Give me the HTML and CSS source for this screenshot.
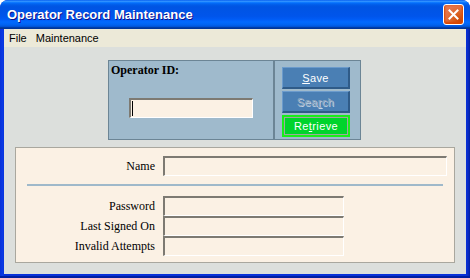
FILE: index.html
```html
<!DOCTYPE html>
<html>
<head>
<meta charset="utf-8">
<link rel="stylesheet" href="styles.css">
</head>
<body>
<div class="window">
  <div class="titlebar">
    <span class="title">Operator Record Maintenance</span>
    <span class="close" aria-label="Close">
      <svg width="11" height="11" viewBox="0 0 11 11"><path d="M1.5 1.5 L9.5 9.5 M9.5 1.5 L1.5 9.5" stroke="#fff" stroke-width="2" stroke-linecap="square"/></svg>
    </span>
  </div>
  <div class="frame">
    <div class="menubar">
      <span class="menu">File</span>
      <span class="menu">Maintenance</span>
    </div>
    <div class="client">
      <div class="idpanel">
        <div class="idleft">
          <div class="idlabel">Operator ID:</div>
          <div class="field idfield"><span class="caret"></span></div>
        </div>
        <div class="idright">
          <div class="btn"><u>S</u>ave</div>
          <div class="btn disabled">Sea<u>r</u>ch</div>
          <div class="btn green">Re<u>t</u>rieve</div>
        </div>
      </div>
      <div class="details">
        <div class="row first">
          <span class="label">Name</span>
          <div class="field wide"></div>
        </div>
        <div class="sep"></div>
        <div class="row">
          <span class="label">Password</span>
          <div class="field short"></div>
        </div>
        <div class="row">
          <span class="label">Last Signed On</span>
          <div class="field short"></div>
        </div>
        <div class="row">
          <span class="label">Invalid Attempts</span>
          <div class="field short"></div>
        </div>
      </div>
    </div>
  </div>
</div>
</body>
</html>
```
FILE: styles.css
```css
html, body {
  margin: 0;
  padding: 0;
  background: #ffffff;
}
.window {
  width: 470px;
  height: 278px;
  display: flex;
  flex-direction: column;
  border-radius: 8px 8px 0 0;
  overflow: hidden;
  background: #0831d9;
}
.titlebar {
  height: 29px;
  flex: none;
  display: flex;
  align-items: center;
  justify-content: space-between;
  padding: 0 6px 0 7px;
  box-sizing: border-box;
  background: linear-gradient(to bottom, #0058ee 0%, #3593ff 4%, #288eff 6%, #127dff 8%, #036ffc 10%, #0262ee 14%, #0057e5 20%, #0054e3 24%, #0055eb 56%, #005bf5 66%, #026afe 76%, #0062ef 86%, #0052d6 92%, #0040ab 94%, #003092 100%);
}
.title {
  font-family: "Liberation Sans", Arial, sans-serif;
  font-weight: bold;
  font-size: 13px;
  color: #ffffff;
  text-shadow: 1px 1px 0 #0f1089;
  margin-top: -1px;
}
.close {
  width: 21px;
  height: 21px;
  box-sizing: border-box;
  border: 1px solid #ffffff;
  border-radius: 3px;
  display: flex;
  align-items: center;
  justify-content: center;
  background: radial-gradient(circle at 85% 85%, #cc4600 0%, #dc6527 40%, #e5754b 70%, #e27a57 100%);
  box-shadow: inset 0 -1px 2px 1px #da4600;
}
.frame {
  flex: 1;
  display: flex;
  flex-direction: column;
  padding: 0 4px 4px 4px;
  background: linear-gradient(to right, #0831d9 0, #0a3ae6 3px, #0831d9 4px, #0831d9 calc(100% - 4px), #0a2bc6 calc(100% - 2px), #001ea0 100%);
  box-shadow: inset 0 -2px 0 #001ea0;
}
.menubar {
  height: 18px;
  flex: none;
  background: #ece9d8;
  display: flex;
  align-items: center;
  gap: 9px;
  font-family: "Liberation Sans", Arial, sans-serif;
  font-size: 11px;
  color: #000;
  padding-left: 5px;
}
.client {
  flex: 1;
  background: #dcdfdc;
  display: flex;
  flex-direction: column;
}
.idpanel {
  margin: 13px 0 0 104px;
  width: 253px;
  height: 80px;
  box-sizing: border-box;
  border: 1px solid #6c8595;
  background: #9fbacc;
  display: flex;
}
.idleft {
  width: 166px;
  flex: none;
  border-right: 2px solid #6c8595;
  display: flex;
  flex-direction: column;
  padding: 2px 0 0 2px;
  box-sizing: border-box;
}
.idlabel {
  font-family: "Liberation Serif", "Times New Roman", serif;
  font-weight: bold;
  font-size: 12px;
  color: #000;
}
.field {
  box-sizing: border-box;
  height: 20px;
  background: #fbf1e4;
  border-style: solid;
  border-width: 2px 1px 1px 2px;
  border-color: #7d7a72 #ffffff #ffffff #7d7a72;
  position: relative;
}
.idfield {
  width: 124px;
  margin: 20px 0 0 18px;
}
.caret {
  position: absolute;
  left: 1px;
  top: 1px;
  width: 1px;
  height: 15px;
  background: #000;
}
.idright {
  flex: 1;
  display: flex;
  flex-direction: column;
  gap: 2px;
  padding: 6px 0 0 7px;
}
.btn {
  width: 68px;
  height: 22px;
  box-sizing: border-box;
  background: #4a7fb4;
  border-style: solid;
  border-width: 1px 2px 2px 1px;
  border-color: #6b9bcc #2f5b88 #2f5b88 #6b9bcc;
  color: #ffffff;
  font-family: "Liberation Sans", Arial, sans-serif;
  font-size: 11px;
  letter-spacing: 0.4px;
  display: flex;
  align-items: center;
  justify-content: center;
}
.btn u {
  text-decoration-thickness: 1px;
  text-underline-offset: 1px;
}
.btn.disabled {
  color: #8fa6bd;
  text-shadow: 1px 1px 0 #c3d3e3;
}
.btn.green {
  background: #00d42c;
  border: 2px solid #19ee19;
  box-shadow: inset 0 0 0 1px #9fa69f;
}
.details {
  margin: 7px 11px 0 11px;
  height: 116px;
  box-sizing: border-box;
  border: 1px solid #a9a79e;
  background: #fbf1e4;
  display: flex;
  flex-direction: column;
  padding-top: 8px;
}
.row {
  display: grid;
  grid-template-columns: 139px auto;
  column-gap: 8px;
  align-items: center;
  height: 20px;
}
.label {
  text-align: right;
  font-family: "Liberation Serif", "Times New Roman", serif;
  font-size: 12px;
  color: #000;
}
.wide {
  width: 284px;
}
.short {
  width: 181px;
}
.sep {
  height: 2px;
  background: #9fb9ca;
  margin: 8px 0 10px 11px;
  width: 416px;
}
```
